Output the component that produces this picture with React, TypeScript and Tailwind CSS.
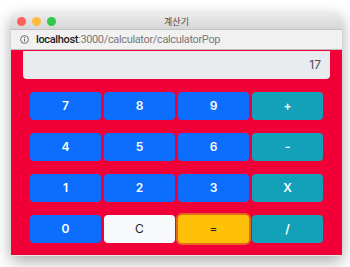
import React from "react";

const font = { fontFamily: "Inter, 'Noto Sans CJK KR', sans-serif" };

function Btn({ label, kind }: { label: string; kind: "p" | "i" | "l" | "w" }) {
  const cls =
    kind === "p"
      ? "bg-[#0d6efd] text-white font-semibold"
      : kind === "i"
      ? "bg-[#12a1b8] text-white font-semibold"
      : kind === "l"
      ? "bg-[#f8f9fa] text-[#212529]"
      : "bg-[#ffc107] text-[#212529] shadow-[0_0_0_2px_rgba(222,170,12,0.6)]";
  return (
    <div className={`h-[28px] rounded-[4px] flex items-center justify-center text-[12px] ${cls}`}>
      {label}
    </div>
  );
}

export default function App() {
  const rows: [string, "p" | "i" | "l" | "w"][][] = [
    [["7", "p"], ["8", "p"], ["9", "p"], ["+", "i"]],
    [["4", "p"], ["5", "p"], ["6", "p"], ["-", "i"]],
    [["1", "p"], ["2", "p"], ["3", "p"], ["X", "i"]],
    [["0", "p"], ["C", "l"], ["=", "w"], ["/", "i"]],
  ];
  return (
    <div className="w-[350px] h-[267px] bg-white pt-[13px] pl-[11px] overflow-hidden" style={font}>
      <div className="w-[331px] rounded-t-[5px] shadow-[0_5px_16px_rgba(0,0,0,0.35)] border-b border-[#e8e8e8]">
        <div className="h-[17px] rounded-t-[5px] bg-gradient-to-b from-[#ececec] to-[#d6d6d6] border-b border-[#c2c2c2] relative flex items-center justify-center">
          <div className="absolute left-[6px] top-[4px] flex gap-[6px]">
            <div className="w-[9px] h-[9px] rounded-full bg-[#fc605c]" />
            <div className="w-[9px] h-[9px] rounded-full bg-[#fdbc40]" />
            <div className="w-[9px] h-[9px] rounded-full bg-[#34c84a]" />
          </div>
          <span className="text-[9px] text-[#4d4d4d] leading-none">계산기</span>
        </div>
        <div className="h-[20px] bg-[#f1f1f1] border-b border-[#bdbdbd] flex items-center pl-[9px] text-[11px] leading-none tracking-[-0.35px] font-[Roboto,sans-serif]">
          <svg width="9" height="9" viewBox="0 0 12 12" className="mr-[7px]">
            <circle cx="6" cy="6" r="5.2" fill="none" stroke="#555" strokeWidth="1.1" />
            <rect x="5.4" y="5" width="1.2" height="3.8" fill="#555" />
            <circle cx="6" cy="3.3" r="0.75" fill="#555" />
          </svg>
          <span className="text-[#222] font-medium">localhost</span>
          <span className="text-[#7a7a7a]">:3000/calculator/calculatorPop</span>
        </div>
        <div className="bg-[#f00037] px-[12px] pt-[1px] pb-[12px]">
          <div className="h-[28px] bg-[#e9ecef] rounded-b-[4px] flex items-center justify-end pr-[9px] text-[12px] text-[#495057]">
            17
          </div>
          <div className="px-[7px] pt-[13px] flex flex-col gap-[13px]">
            {rows.map((r, i) => (
              <div key={i} className="grid grid-cols-4 gap-[3px]">
                {r.map(([l, k]) => (
                  <Btn key={l} label={l} kind={k} />
                ))}
              </div>
            ))}
          </div>
        </div>
      </div>
    </div>
  );
}
